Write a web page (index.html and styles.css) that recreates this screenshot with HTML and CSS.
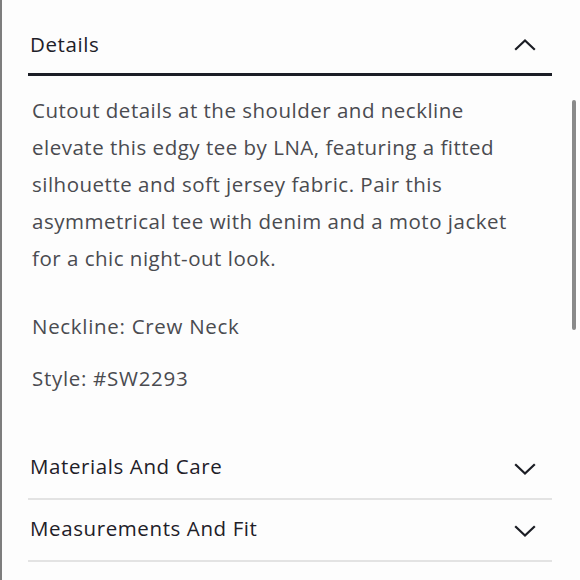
FILE: index.html
```html
<!DOCTYPE html>
<html>
<head>
<meta charset="utf-8">
<link rel="stylesheet" href="styles.css">
</head>
<body>
<div class="page">
  <section class="accordion">
    <div class="acc-head open">
      <span class="acc-title">Details</span>
      <svg class="chev" width="22" height="13" viewBox="0 0 22 13"><path d="M2 11 L11 2.5 L20 11" fill="none" stroke="#1b1d24" stroke-width="2.2" stroke-linecap="square"/></svg>
    </div>
    <div class="acc-body">
      <p class="desc">Cutout details at the shoulder and neckline elevate this edgy tee by LNA, featuring a fitted silhouette and soft jersey fabric. Pair this asymmetrical tee with denim and a moto jacket for a chic night-out look.</p>
      <p class="spec spec-first">Neckline: Crew Neck</p>
      <p class="spec">Style: #SW2293</p>
    </div>
    <div class="acc-head closed">
      <span class="acc-title">Materials And Care</span>
      <svg class="chev down" width="22" height="13" viewBox="0 0 22 13"><path d="M2 2 L11 10.5 L20 2" fill="none" stroke="#1b1d24" stroke-width="2.2" stroke-linecap="square"/></svg>
    </div>
    <div class="acc-head closed">
      <span class="acc-title">Measurements And Fit</span>
      <svg class="chev down" width="22" height="13" viewBox="0 0 22 13"><path d="M2 2 L11 10.5 L20 2" fill="none" stroke="#1b1d24" stroke-width="2.2" stroke-linecap="square"/></svg>
    </div>
  </section>
  <div class="scroll-thumb"></div>
</div>
</body>
</html>
```
FILE: styles.css
```css
html, body {
  margin: 0;
  padding: 0;
  background: #fdfdfd;
}
body {
  font-family: "Open Sans", Lato, sans-serif;
}
.page {
  position: relative;
  height: 580px;
  border-left: 2px solid #7d7d7d;
  box-sizing: border-box;
  padding: 0 28px 0 26px;
  overflow: hidden;
}
.accordion {
  display: flex;
  flex-direction: column;
}
.acc-head {
  display: flex;
  align-items: center;
  justify-content: space-between;
  padding: 0 16px 0 2px;
}
.acc-head.open {
  height: 58px;
  padding-top: 15px;
  border-bottom: 3px solid #1b1e26;
}
.acc-head.closed {
  border-bottom: 2px solid #e3e3e3;
  padding-bottom: 4px;
  box-sizing: border-box;
  height: 62px;
}
.acc-title {
  font-size: 20.5px;
  letter-spacing: 0.6px;
  color: #1e2028;
}
.chev {
  display: block;
}
.chev.down {
  margin-top: 6px;
}
.acc-body {
  padding: 16px 0 41px 4px;
}
.desc {
  margin: 0;
  max-width: 482px;
  font-size: 20.5px;
  letter-spacing: 0.5px;
  line-height: 37px;
  color: #4a4b50;
}
.spec {
  margin: 15px 0 0 0;
  font-size: 20.5px;
  letter-spacing: 0.7px;
  line-height: 37px;
  color: #4a4b50;
}
.spec-first {
  margin-top: 31px;
}
.scroll-thumb {
  position: absolute;
  left: 570px;
  top: 100px;
  width: 4px;
  height: 230px;
  border-radius: 2px;
  background: #8a8a8a;
}
```
